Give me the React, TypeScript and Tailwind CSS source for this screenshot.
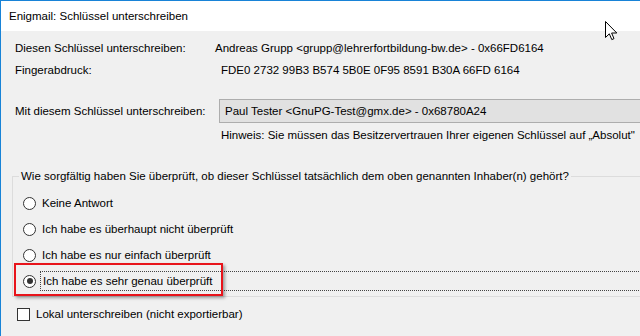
import React from "react"

const font = "font-['Liberation_Sans',Arial,sans-serif]"

function Radio({ checked }: { checked?: boolean }) {
  return (
    <span className="flex h-[13px] w-[13px] shrink-0 items-center justify-center rounded-full border border-[#333333] bg-white">
      {checked && <span className="h-[6px] w-[6px] rounded-full bg-[#333333]" />}
    </span>
  )
}

function Cursor() {
  return (
    <svg className="absolute left-[604px] top-[20px]" width="13" height="20" viewBox="0 0 13 20">
      <path
        d="M0.5 0.5 L0.5 16.5 L4.3 12.8 L6.8 18.6 L9 17.6 L6.6 12 L11.8 12 Z"
        fill="white"
        stroke="black"
        strokeWidth="1"
        strokeLinejoin="miter"
      />
    </svg>
  )
}

export default function App() {
  const options = [
    "Keine Antwort",
    "Ich habe es überhaupt nicht überprüft",
    "Ich habe es nur einfach überprüft",
  ]

  return (
    <div className={`relative h-[336px] w-[640px] overflow-hidden border-l border-t border-[#1883d7] bg-[#f0f0f0] text-[11.5px] leading-[16px] text-black ${font}`}>
      {/* title bar */}
      <div className="flex h-[30px] items-center bg-white pl-[8px] text-[11.5px]">
        Enigmail: Schlüssel unterschreiben
      </div>
      <Cursor />

      <div className="pl-[14px] pt-[7px] whitespace-nowrap">
        <div className="flex h-[20px] items-center">
          <span className="w-[200px] shrink-0">Diesen Schlüssel unterschreiben:</span>
          <span>Andreas Grupp &lt;grupp@lehrerfortbildung-bw.de&gt; - 0x66FD6164</span>
        </div>
        <div className="mt-[2px] flex h-[20px] items-center">
          <span className="w-[206px] shrink-0">Fingerabdruck:</span>
          <span>FDE0 2732 99B3 B574 5B0E 0F95 8591 B30A 66FD 6164</span>
        </div>

        <div className="mt-[19px] flex h-[24px] items-center">
          <span className="w-[204px] shrink-0">Mit diesem Schlüssel unterschreiben:</span>
          <div className="flex h-[24px] w-[500px] shrink-0 items-center border border-[#adadad] bg-[#e1e1e1] pl-[5px]">
            Paul Tester &lt;GnuPG-Test@gmx.de&gt; - 0x68780A24
          </div>
        </div>
        <div className="mt-[2px] flex h-[20px] items-center pl-[206px]">
          Hinweis: Sie müssen das Besitzervertrauen Ihrer eigenen Schlüssel auf „Absolut"
        </div>
      </div>

      {/* group box */}
      <fieldset className="ml-[11px] mt-[23px] h-[129px] w-[700px] border border-[#dcdcdc] p-0 pt-[6px]">
        <legend className="ml-[6px] px-[2px] leading-[16px] whitespace-nowrap">
          Wie sorgfältig haben Sie überprüft, ob dieser Schlüssel tatsächlich dem oben genannten Inhaber(n) gehört?
        </legend>
        <div className="pl-[10px]">
          {options.map((o) => (
            <div key={o} className="flex h-[26px] items-center gap-[6px]">
              <Radio />
              <span>{o}</span>
            </div>
          ))}
          <div className="relative flex h-[26px] items-center gap-[4px]">
            <Radio checked />
            <span className="flex h-[20px] flex-1 items-center border border-dotted border-[#444444] pl-[2px]">
              Ich habe es sehr genau überprüft
            </span>
            <div className="pointer-events-none absolute left-[-9px] top-[-5px] h-[33px] w-[209px] border-[2px] border-[#e8141b] shadow-[2px_2px_3px_rgba(0,0,0,0.35)]" />
          </div>
        </div>
      </fieldset>

      <div className="ml-[16px] mt-[9px] flex h-[16px] items-center gap-[6px]">
        <span className="h-[13px] w-[13px] border border-[#333333] bg-white" />
        <span>Lokal unterschreiben (nicht exportierbar)</span>
      </div>
    </div>
  )
}
